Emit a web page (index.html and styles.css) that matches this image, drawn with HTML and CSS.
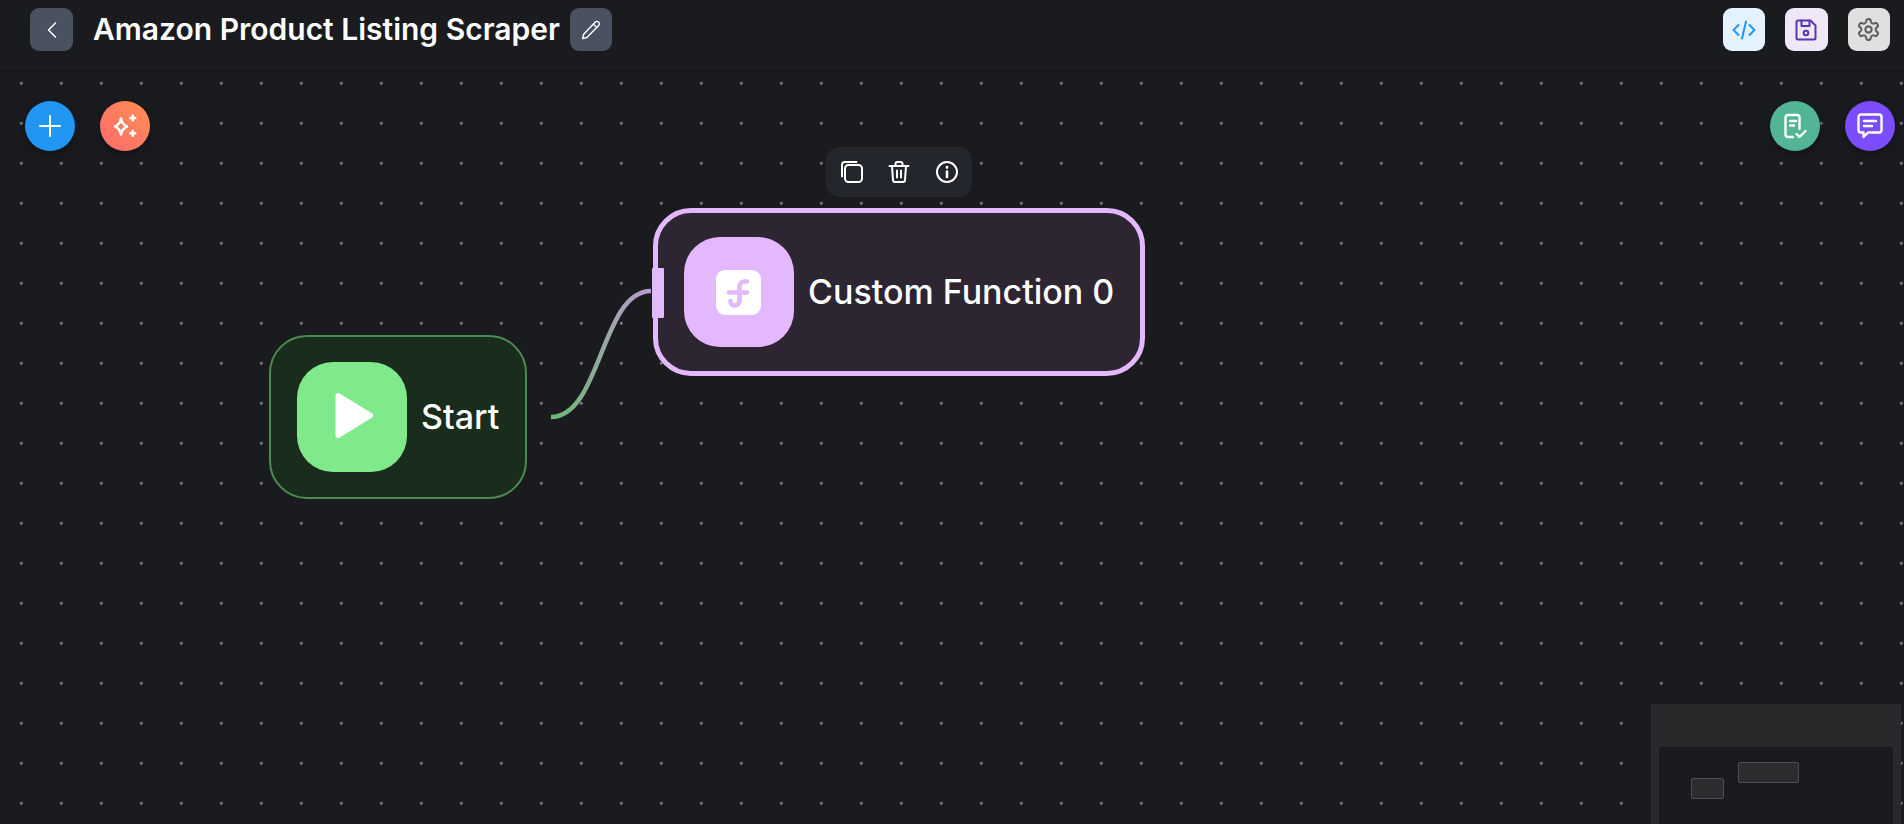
FILE: index.html
```html
<!DOCTYPE html>
<html lang="en">
<head>
<meta charset="utf-8">
<title>Amazon Product Listing Scraper</title>
<link rel="stylesheet" href="styles.css">
</head>
<body>
<header class="topbar">
  <div class="topbar-left">
    <button class="btn-square btn-slate back-btn" aria-label="Back">
      <svg width="24" height="24" viewBox="0 0 24 24" class="line-icon"><path d="M15.500 5 8.500 12l7 7"/></svg>
    </button>
    <h1 class="title">Amazon Product Listing Scraper</h1>
    <button class="btn-square btn-slate" aria-label="Rename">
      <svg width="22" height="22" viewBox="0 0 24 24" class="line-icon"><path d="M16.500 3.500a2.600 2.600 0 0 1 3.900 3.500L7.500 20.200 2.800 21.400 4 16.600Z"/><path d="m14.500 5.600 3.800 3.600"/></svg>
    </button>
  </div>
  <div class="topbar-right">
    <button class="btn-square btn-code" aria-label="Code">
      <svg width="24" height="24" viewBox="0 0 24 24" class="line-icon"><path d="m6.500 7-5 5 5 5"/><path d="m17.500 7 5 5-5 5"/><path d="M14 3.500 10 20.500"/></svg>
    </button>
    <button class="btn-square btn-save" aria-label="Save">
      <svg width="24" height="24" viewBox="0 0 24 24" class="line-icon"><path d="M4 2.500h12.500l5 5V20a1.500 1.500 0 0 1-1.500 1.500H4A1.500 1.500 0 0 1 2.500 20V4A1.500 1.500 0 0 1 4 2.500Z"/><path d="M7.500 2.500V8h8V2.500"/><circle cx="12" cy="15" r="2.300"/></svg>
    </button>
    <button class="btn-square btn-gear" aria-label="Settings">
      <svg width="25" height="25" viewBox="0 0 24 24" class="line-icon"><path d="M12.220 2h-.44a2 2 0 0 0-2 2v.18a2 2 0 0 1-1 1.730l-.43.250a2 2 0 0 1-2 0l-.15-.08a2 2 0 0 0-2.730.730l-.22.380a2 2 0 0 0 .730 2.730l.15.100a2 2 0 0 1 1 1.720v.510a2 2 0 0 1-1 1.740l-.15.090a2 2 0 0 0-.730 2.730l.22.380a2 2 0 0 0 2.730.730l.15-.08a2 2 0 0 1 2 0l.430.250a2 2 0 0 1 1 1.730V20a2 2 0 0 0 2 2h.440a2 2 0 0 0 2-2v-.18a2 2 0 0 1 1-1.730l.430-.25a2 2 0 0 1 2 0l.150.080a2 2 0 0 0 2.730-.730l.220-.39a2 2 0 0 0-.730-2.730l-.15-.08a2 2 0 0 1-1-1.740v-.5a2 2 0 0 1 1-1.740l.150-.09a2 2 0 0 0 .730-2.730l-.22-.38a2 2 0 0 0-2.730-.73l-.15.08a2 2 0 0 1-2 0l-.43-.25a2 2 0 0 1-1-1.730V4a2 2 0 0 0-2-2z"/><circle cx="12" cy="12" r="3"/></svg>
    </button>
  </div>
</header>

<main class="canvas">
  <svg class="edge" width="110" height="140" viewBox="0 0 110 140">
    <defs>
      <linearGradient id="edgeGrad" gradientUnits="userSpaceOnUse" x1="3" y1="129" x2="103" y2="3">
        <stop offset="0" stop-color="#6fb677"/>
        <stop offset="1" stop-color="#b79cc9"/>
      </linearGradient>
    </defs>
    <path d="M3 129C53 129 53 3 103 3" fill="none" stroke="url(#edgeGrad)" stroke-width="4.500"/>
  </svg>

  <div class="float-group float-left">
    <button class="fab fab-blue" aria-label="Add">
      <svg width="24" height="24" viewBox="0 0 24 24" class="line-icon"><path d="M12 2v20M2 12h20"/></svg>
    </button>
    <button class="fab fab-coral" aria-label="AI">
      <svg width="26" height="26" viewBox="0 0 26 26"><path class="sparkle" d="M9 5.500c.8 4.200 2.400 6.500 6 8-3.600 1.500-5.200 3.800-6 8-.8-4.200-2.400-6.500-6-8 3.600-1.500 5.200-3.800 6-8Z"/><path class="sparkle-fill" d="M19.500 1.500H22v2.250h2.250v2.500H22V8.500h-2.500V6.250h-2.250v-2.500h2.250ZM19.500 16.800H22v2.250h2.250v2.500H22v2.250h-2.500v-2.250h-2.250v-2.500h2.250Z"/></svg>
    </button>
  </div>

  <div class="float-group float-right">
    <button class="fab fab-green" aria-label="Checklist">
      <svg width="28" height="28" viewBox="0 0 28 28" class="line-icon fab-line"><path d="M12 25H7a2.500 2.500 0 0 1-2.500-2.500v-17A2.500 2.500 0 0 1 7 3h9a2.500 2.500 0 0 1 2.500 2.500V17"/><path d="M9 9h6M9 13.500h4"/><path d="m15.500 22 3 3 6-6"/></svg>
    </button>
    <button class="fab fab-purple" aria-label="Chat">
      <svg width="28" height="28" viewBox="0 0 28 28" class="line-icon fab-line"><path d="M5 2.500h18A2.500 2.500 0 0 1 25.500 5v13a2.500 2.500 0 0 1-2.500 2.500H12L7.500 25v-4.500H5A2.500 2.500 0 0 1 2.500 18V5A2.500 2.500 0 0 1 5 2.500Z"/><path d="M8 9h12M8 14h8"/></svg>
    </button>
  </div>

  <div class="node-toolbar">
    <svg width="24" height="24" viewBox="0 0 24 24" class="line-icon"><rect x="5" y="5" width="17" height="17" rx="3.500"/><path d="M2 16.500V5a3 3 0 0 1 3-3h11.500"/></svg>
    <svg width="24" height="24" viewBox="0 0 24 24" class="line-icon"><path d="M2.500 6h19M5 6l1 14a2 2 0 0 0 2 2h8a2 2 0 0 0 2-2l1-14M8.500 6V4a2 2 0 0 1 2-2h3a2 2 0 0 1 2 2v2M10 10.500v7M14 10.500v7"/></svg>
    <svg width="24" height="24" viewBox="0 0 24 24" class="line-icon"><circle cx="12" cy="12" r="10"/><path class="thick" d="M12 11.500V17"/><path class="thick" d="M12 7v.600"/></svg>
  </div>

  <div class="node node-fn">
    <span class="handle"></span>
    <div class="node-icon icon-fn">
      <span class="fn-tile">
        <svg width="44" height="44" viewBox="0 0 44 44" class="fn-glyph"><path d="M31 11.500h-2.500a5 5 0 0 0-5 5V30.500a5 5 0 0 1-5 5 4 4 0 0 1-4-4.500"/><path d="M13 22.500h18"/></svg>
      </span>
    </div>
    <span class="node-label">Custom Function 0</span>
  </div>

  <div class="node node-start">
    <div class="node-icon icon-start">
      <svg width="44" height="50" viewBox="0 0 44 50"><path class="play" d="M8 3.500 40.500 23.500 8 43.500Z"/></svg>
    </div>
    <span class="node-label">Start</span>
  </div>

  <aside class="minimap">
    <div class="mini-view">
      <span class="mini-node mini-fn"></span>
      <span class="mini-node mini-start"></span>
    </div>
  </aside>
</main>
</body>
</html>
```

FILE: styles.css
```css
* { box-sizing: border-box; }
html, body { margin: 0; height: 100%; }
body {
  display: flex;
  flex-direction: column;
  height: 100vh;
  overflow: hidden;
  background: #1a1b1f;
  color: #fff;
  font-family: Inter, "Liberation Sans", sans-serif;
}
button { border: 0; padding: 0; cursor: pointer; font: inherit; }

.line-icon {
  fill: none;
  stroke: currentColor;
  stroke-width: 2;
  stroke-linecap: round;
  stroke-linejoin: round;
  display: block;
}
.thick { stroke-width: 2.600; }
.fab-line { stroke-width: 2.400; }

.topbar {
  flex: 0 0 72px;
  display: flex;
  justify-content: space-between;
  padding: 8px 14px 0 30px;
  border-bottom: 1px solid #141519;
  align-items: flex-start;
}
.topbar-left { display: flex; align-items: center; }
.topbar-right { display: flex; gap: 20px; }
.title {
  margin: 0 10px 0 20px;
  font-size: 30px;
  line-height: 43px;
  font-weight: 600;
  white-space: nowrap;
}
.btn-square {
  width: 42.500px;
  height: 43px;
  border-radius: 9px;
  display: flex;
  align-items: center;
  justify-content: center;
}
.btn-slate { background: #4a5160; color: #fff; }
.back-btn { width: 43px; }
.back-btn .line-icon, .btn-slate .line-icon { stroke-width: 1.500; }
.btn-code { background: #e3f2fd; color: #2196f3; }
.btn-save { background: #ede7f6; color: #5e35b1; }
.btn-gear { background: #e0e0e0; color: #616161; }

.canvas {
  position: relative;
  flex: 1;
  overflow: hidden;
  background-color: #1a1b1f;
  background-image: radial-gradient(circle, #9a9a9e 0, #9a9a9e 1px, transparent 1.700px);
  background-size: 40px 40px;
  background-position: 1.300px -8.700px;
}

.float-group { position: absolute; top: 29px; display: flex; gap: 25px; }
.float-left { left: 25px; }
.float-right { right: 9px; }
.fab {
  width: 50px;
  height: 50px;
  border-radius: 50%;
  display: flex;
  align-items: center;
  justify-content: center;
  color: #fff;
  box-shadow: 0 4px 12px rgba(0, 0, 0, .3);
}
.fab-blue { background: #2196f3; }
.fab-coral { background: linear-gradient(45deg, #ff6b6b, #ff8e53); }
.fab-green { background: #52b596; }
.fab-purple { background: #7c4dff; }
.sparkle { fill: none; stroke: #fff; stroke-width: 2.600; stroke-linejoin: round; }
.sparkle-fill { fill: #fff; }

.edge { position: absolute; left: 548px; top: 216px; }

.node-toolbar {
  position: absolute;
  left: 826px;
  top: 75px;
  width: 146px;
  height: 50px;
  border-radius: 14px;
  background: #23262c;
  display: flex;
  align-items: center;
  gap: 23.300px;
  padding-left: 14px;
  color: #fff;
}

.node { position: absolute; display: flex; align-items: center; }
.node-label { font-size: 34px; font-weight: 500; line-height: 1; white-space: nowrap; }
.node-icon {
  width: 110px;
  height: 110px;
  border-radius: 36px;
  display: flex;
  align-items: center;
  justify-content: center;
  flex: none;
}

.node-fn {
  left: 653px;
  top: 136px;
  width: 492px;
  height: 168px;
  padding-left: 26px;
  gap: 14px;
  background: #2e2533;
  border: 5px solid #e4b8fd;
  border-radius: 38px;
}
.icon-fn { background: #e4b8fd; }
.fn-tile {
  width: 45px;
  height: 45px;
  margin-right: 2px;
  border-radius: 9px;
  background: #fff;
  display: flex;
  align-items: center;
  justify-content: center;
}
.fn-glyph { fill: none; stroke: #e4b8fd; stroke-width: 4.600; stroke-linecap: round; }
.handle {
  position: absolute;
  left: -6px;
  top: 55px;
  width: 12px;
  height: 50px;
  background: #e4b8fd;
  border-radius: 1px;
}

.node-start {
  left: 269px;
  top: 263px;
  width: 258px;
  height: 164px;
  padding-left: 26px;
  gap: 14px;
  background: #1a2c1c;
  border: 2.500px solid #4c8a4f;
  border-radius: 38px;
}
.icon-start { background: #80e98b; }
.play { fill: #fff; stroke: #fff; stroke-width: 5; stroke-linejoin: round; }

.minimap {
  position: absolute;
  left: 1651px;
  top: 632px;
  width: 250px;
  height: 120px;
  background: #28292b;
  padding: 43px 8px 0;
}
.mini-view { position: relative; height: 100%; background: #1a1b1f; }
.mini-node {
  position: absolute;
  background: #2d2d2f;
  border: 1px solid #4b5058;
  border-radius: 2px;
}
.mini-fn { left: 79px; top: 15px; width: 61px; height: 21px; }
.mini-start { left: 32px; top: 31px; width: 33px; height: 21px; }
```
